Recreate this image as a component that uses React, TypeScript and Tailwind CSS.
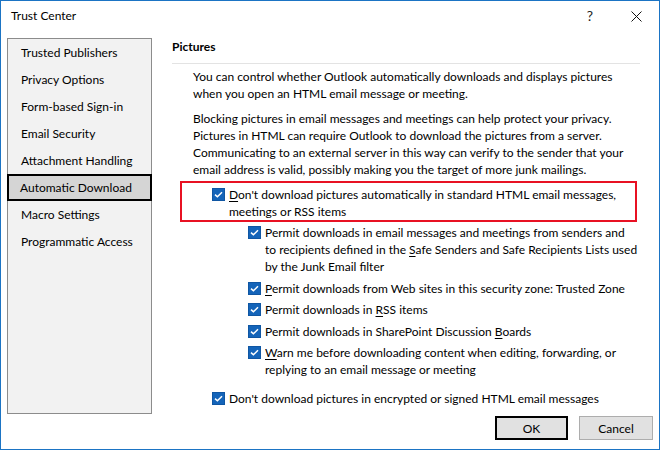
import React from "react";

function Check() {
  return (
    <svg width="13" height="13" viewBox="0 0 13 13" className="shrink-0">
      <rect x="0.5" y="0.5" width="12" height="12" fill="#1464b9" stroke="#0f56a3" />
      <polyline points="3,6.6 5.4,8.8 10,4.2" fill="none" stroke="#ffffff" strokeWidth="1.5" />
    </svg>
  );
}

function U({ children }: { children: React.ReactNode }) {
  return <span className="underline underline-offset-2">{children}</span>;
}

const navItems = [
  "Trusted Publishers",
  "Privacy Options",
  "Form-based Sign-in",
  "Email Security",
  "Attachment Handling",
  "Automatic Download",
  "Macro Settings",
  "Programmatic Access",
];

export default function App() {
  return (
    <div className="w-[660px] h-[450px] bg-white border border-[#1b74c4] flex flex-col text-black text-[12px] leading-[17px] overflow-hidden font-['Lato',sans-serif]">
      {/* title bar */}
      <div className="h-[37px] flex items-start shrink-0">
        <div className="pl-[10px] pt-[6px] leading-[18px]">Trust Center</div>
        <div className="ml-auto flex items-start pt-[6px]">
          <span className="leading-[18px] text-[14px] text-[#222]">?</span>
          <svg width="11" height="11" viewBox="0 0 11 11" className="ml-[38px] mr-[17px] mt-[4px]">
            <path d="M0.5 0.5 L10.5 10.5 M10.5 0.5 L0.5 10.5" stroke="#111" strokeWidth="1" />
          </svg>
        </div>
      </div>

      {/* body */}
      <div className="flex h-[376px] shrink-0">
        <div className="ml-[6px] w-[145px] h-full border border-[#8c8c8c] bg-[#f2f2f2] flex flex-col">
          {navItems.map((n) =>
            n === "Automatic Download" ? (
              <div
                key={n}
                className="h-[27px] flex items-center pl-[11px] bg-[#d5d5d5] border-2 border-black -mx-[1px] whitespace-nowrap"
              >
                {n}
              </div>
            ) : (
              <div key={n} className="h-[27px] flex items-center pl-[13px] whitespace-nowrap">
                {n}
              </div>
            )
          )}
        </div>

        <div className="ml-[20px] w-[468px] flex flex-col">
          <div className="font-bold leading-[18px]">Pictures</div>
          <div className="mt-[7px] h-px bg-[#e3e3e3]" />
          <div className="mt-[4px] pl-[21px] whitespace-nowrap">
            You can control whether Outlook automatically downloads and displays pictures
            <br />
            when you open an HTML email message or meeting.
          </div>
          <div className="mt-[8px] pl-[21px] whitespace-nowrap">
            Blocking pictures in email messages and meetings can help protect your privacy.
            <br />
            Pictures in HTML can require Outlook to download the pictures from a server.
            <br />
            Communicating to an external server in this way can verify to the sender that your
            <br />
            email address is valid, possibly making you the target of more junk mailings.
          </div>

          <div className="mt-[3px] ml-[8px] w-[457px] h-[41px] border-2 border-[#e81123] pt-[3px] pl-[30px] flex items-start">
            <div className="mt-[2px]">
              <Check />
            </div>
            <div className="ml-[4px] whitespace-nowrap">
              <U>D</U>on't download pictures automatically in standard HTML email messages,
              <br />
              meetings or RSS items
            </div>
          </div>

          <div className="mt-[2px] pl-[76px] flex flex-col gap-[4.5px]">
            <div className="flex items-start">
              <div className="mt-[2px]">
                <Check />
              </div>
              <div className="ml-[4px] whitespace-nowrap">
                Permit downloads in email messages and meetings from senders and
                <br />
                to recipients defined in the <U>S</U>afe Senders and Safe Recipients Lists used
                <br />
                by the Junk Email filter
              </div>
            </div>
            <div className="flex items-start">
              <div className="mt-[2px]">
                <Check />
              </div>
              <div className="ml-[4px] whitespace-nowrap">
                <U>P</U>ermit downloads from Web sites in this security zone: Trusted Zone
              </div>
            </div>
            <div className="flex items-start">
              <div className="mt-[2px]">
                <Check />
              </div>
              <div className="ml-[4px] whitespace-nowrap">
                Permit downloads in <U>R</U>SS items
              </div>
            </div>
            <div className="flex items-start">
              <div className="mt-[2px]">
                <Check />
              </div>
              <div className="ml-[4px] whitespace-nowrap">
                Permit downloads in SharePoint Discussion <U>B</U>oards
              </div>
            </div>
            <div className="flex items-start">
              <div className="mt-[2px]">
                <Check />
              </div>
              <div className="ml-[4px] whitespace-nowrap">
                <U>W</U>arn me before downloading content when editing, forwarding, or
                <br />
                replying to an email message or meeting
              </div>
            </div>
          </div>

          <div className="mt-[12px] pl-[40px] flex items-start">
            <div className="mt-[2px]">
              <Check />
            </div>
            <div className="ml-[4px] whitespace-nowrap">
              Don't download pictures in encrypted or signed HTML email messages
            </div>
          </div>
        </div>
      </div>

      {/* buttons */}
      <div className="mt-[2px] flex justify-end pr-[6px] gap-[11px]">
        <button className="w-[73px] h-[24px] border-2 border-black bg-[#e1e1e1] text-[12px]">OK</button>
        <button className="w-[74px] h-[24px] border border-[#adadad] bg-[#e1e1e1] text-[12px]">Cancel</button>
      </div>
    </div>
  );
}
